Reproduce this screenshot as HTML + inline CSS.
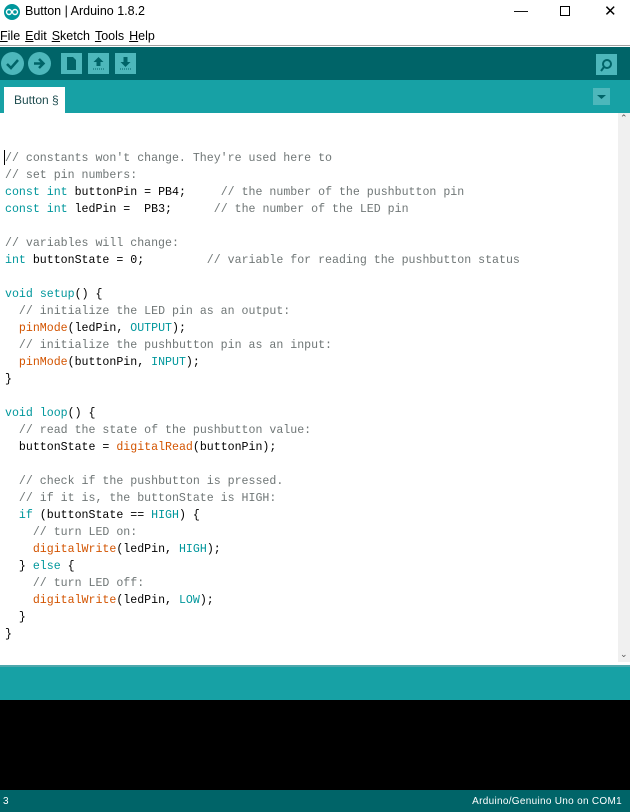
<!DOCTYPE html>
<html><head><meta charset="utf-8"><style>
*{margin:0;padding:0;box-sizing:border-box}
body{width:630px;height:812px;overflow:hidden;background:#fff;font-family:"Liberation Sans",sans-serif;position:relative}
.abs{position:absolute}
.title{top:0;left:0;width:630px;height:25px;background:#fff;font-size:12.5px}
.menu{top:26px;left:0;width:630px;height:20px;font-size:12.5px;border-bottom:1px solid #a0a0a0}
.menu span{margin-right:5px}
.tb{top:47px;left:0;width:630px;height:33px;background:#006468}
.tabs{top:80px;left:0;width:630px;height:33px;background:#17a1a5}
.tab{top:87px;left:4px;width:61px;height:26px;background:#fff;font-size:12px;color:#1f4d50;padding:6px 0 0 10px}
.ed{top:113px;left:0;width:618px;height:549px;background:#fff}
pre{position:absolute;top:150px;left:5px;font-family:"Liberation Mono",monospace;font-size:11.6px;line-height:17px;color:#000}
.c{color:#6f7676}.k{color:#00979c}.f{color:#d35400}
.sb{top:113px;left:618px;width:12px;height:549px;background:#f0f0f0}
.st{top:665px;left:0;width:630px;height:35px;background:#17a1a5;border-top:2px solid #4fa8ad}
.con{top:700px;left:0;width:630px;height:90px;background:#000}
.bot{top:790px;left:0;width:630px;height:22px;background:#006468;color:#fff;font-size:10px}
.btn{width:23px;height:23px;border-radius:50%;background:#4db7bb;top:52px}
.sq{width:21px;height:21px;background:#4db7bb;top:53px}
</style></head><body>
<div class="abs title">
 <svg class="abs" style="left:4px;top:4px" width="16" height="16"><circle cx="8" cy="8" r="8" fill="#00979c"/><circle cx="5" cy="8" r="2.5" fill="none" stroke="#fff" stroke-width="1.4"/><circle cx="11" cy="8" r="2.5" fill="none" stroke="#fff" stroke-width="1.4"/></svg>
 <span class="abs" style="left:25px;top:4px">Button | Arduino 1.8.2</span>
 <span class="abs" style="left:514px;top:2px;font-size:14px">&#8212;</span>
 <div class="abs" style="left:560px;top:6px;width:10px;height:10px;border:1px solid #000"></div>
 <span class="abs" style="left:604px;top:2px;font-size:15px">&#10005;</span>
</div>
<div class="abs menu"><div style="padding:3px 0 0 0"><span><u>F</u>ile</span><span><u>E</u>dit</span><span><u>S</u>ketch</span><span><u>T</u>ools</span><span><u>H</u>elp</span></div></div>
<div class="abs tb"></div>
<div class="abs btn" style="left:1px"><svg width="23" height="23"><path d="M6 12l4 4 7-8" stroke="#006468" stroke-width="2.5" fill="none"/></svg></div>
<div class="abs btn" style="left:28px"><svg width="23" height="23"><path d="M6 11.5h9M11 7l4.5 4.5L11 16" stroke="#006468" stroke-width="2.5" fill="none"/></svg></div>
<div class="abs sq" style="left:61px"><svg width="21" height="21"><path d="M6 4h6l3 3v10H6z" fill="#006468"/></svg></div>
<div class="abs sq" style="left:88px"><svg width="21" height="21"><path d="M10.5 4l5 5h-3v4h-4V9h-3z" fill="#006468"/><path d="M5 16h11" stroke="#006468" stroke-dasharray="1 1"/></svg></div>
<div class="abs sq" style="left:115px"><svg width="21" height="21"><path d="M10.5 14l5-5h-3V4h-4v5h-3z" fill="#006468"/><path d="M5 16h11" stroke="#006468" stroke-dasharray="1 1"/></svg></div>
<div class="abs sq" style="left:596px;top:54px"><svg width="21" height="21"><circle cx="11" cy="10" r="4" fill="none" stroke="#006468" stroke-width="2"/><path d="M8 13l-3 4" stroke="#006468" stroke-width="2"/></svg></div>
<div class="abs tabs"></div>
<div class="abs tab">Button §</div>
<div class="abs" style="left:593px;top:88px;width:17px;height:17px;background:#4db7bb"><svg width="17" height="17"><path d="M4 7h9l-4.5 4z" fill="#006468"/></svg></div>
<div class="abs ed"></div>
<div class="abs" style="left:4px;top:150px;width:1px;height:15px;background:#000"></div>
<pre><span class="c">// constants won't change. They're used here to
// set pin numbers:</span>
<span class="k">const</span> <span class="k">int</span> buttonPin = PB4;     <span class="c">// the number of the pushbutton pin</span>
<span class="k">const</span> <span class="k">int</span> ledPin =  PB3;      <span class="c">// the number of the LED pin</span>

<span class="c">// variables will change:</span>
<span class="k">int</span> buttonState = 0;         <span class="c">// variable for reading the pushbutton status</span>

<span class="k">void</span> <span class="k">setup</span>() {
  <span class="c">// initialize the LED pin as an output:</span>
  <span class="f">pinMode</span>(ledPin, <span class="k">OUTPUT</span>);
  <span class="c">// initialize the pushbutton pin as an input:</span>
  <span class="f">pinMode</span>(buttonPin, <span class="k">INPUT</span>);
}

<span class="k">void</span> <span class="k">loop</span>() {
  <span class="c">// read the state of the pushbutton value:</span>
  buttonState = <span class="f">digitalRead</span>(buttonPin);

  <span class="c">// check if the pushbutton is pressed.
  // if it is, the buttonState is HIGH:</span>
  <span class="k">if</span> (buttonState == <span class="k">HIGH</span>) {
    <span class="c">// turn LED on:</span>
    <span class="f">digitalWrite</span>(ledPin, <span class="k">HIGH</span>);
  } <span class="k">else</span> {
    <span class="c">// turn LED off:</span>
    <span class="f">digitalWrite</span>(ledPin, <span class="k">LOW</span>);
  }
}</pre>
<div class="abs sb"><span class="abs" style="left:2px;top:0;font-size:9px;color:#555">&#8963;</span><span class="abs" style="left:2px;top:536px;font-size:9px;color:#555">&#8964;</span></div>
<div class="abs st"></div>
<div class="abs con"></div>
<div class="abs bot"><span class="abs" style="left:3px;top:6px">3</span><span class="abs" style="right:8px;top:6px;letter-spacing:0.3px">Arduino/Genuino Uno on COM1</span></div>
</body></html>
